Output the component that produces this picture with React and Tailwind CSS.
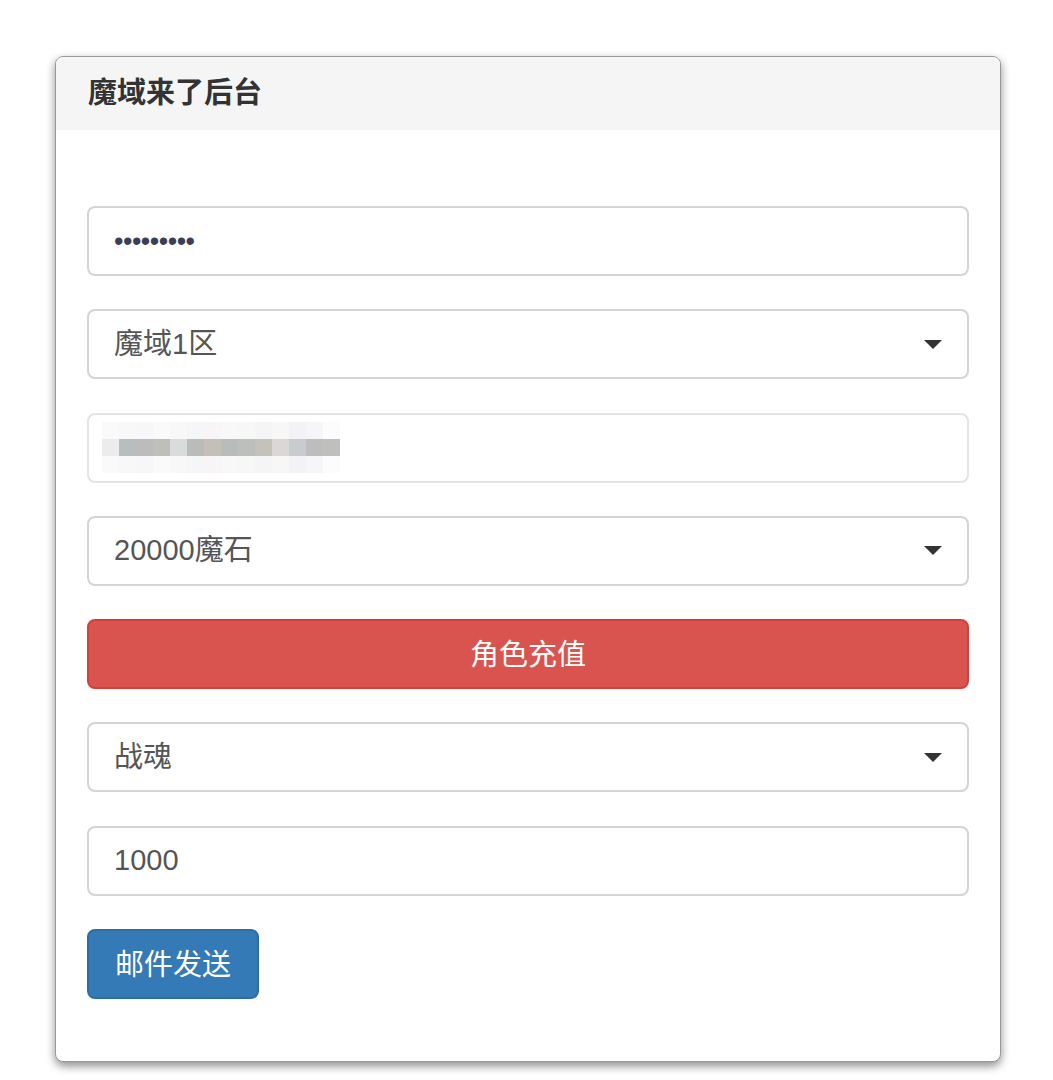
import React from 'react';

const font = { fontFamily: '"Liberation Sans", "Noto Sans CJK SC", sans-serif' };

// mosaic blocks covering the blurred account field
const mosaic = [
  '#ececec', '#b6bfbf', '#bcbcbc', '#bfbfba', '#d8dcdb', '#bbbcb9', '#c6beb8',
  '#b8bdbb', '#bcbfbc', '#c4c2bb', '#dcd6d6', '#c8ccd0', '#bdbdbb', '#bfbfbd',
];
const mosaicLow = [
  '#fafafa', '#f8f8f8', '#f7f7f9', '#fafafa', '#f8f8f8', '#f5f6f8', '#f7f5f5',
  '#f8f8f8', '#f7f7f7', '#f5f5f5', '#f7f7f7', '#f3f3f7', '#f5f5fa', '#fcfcfc',
];

function Caret() {
  return (
    <svg width="18" height="9" viewBox="0 0 18 9" className="shrink-0">
      <path d="M0 0 H18 L9 9 Z" fill="#333" />
    </svg>
  );
}

function Field({ children, select = false }) {
  return (
    <div className="flex items-center h-[70px] w-full border-2 border-[#d4d4d4] rounded-[8px] bg-white pl-[25px] pr-[25px] text-[29px] text-[#555]">
      <div className="flex-1">{children}</div>
      {select && <Caret />}
    </div>
  );
}

export default function App() {
  return (
    <div className="min-h-[1080px] bg-white pt-[56px] pl-[55px]" style={font}>
      <div className="w-[946px] border border-[#9a9a9a] rounded-[8px] bg-white shadow-[0_4px_10px_rgba(0,0,0,0.45)] overflow-hidden">
        <div className="h-[73px] bg-[#f5f5f5] flex items-center pl-[32px] text-[29px] font-bold text-[#333]">
          魔域来了后台
        </div>
        <div className="px-[31px] pt-[76px] pb-[62px] flex flex-col gap-[33.3px]">
          <Field>
            <span className="text-[27px] tracking-[-0.5px] text-[#3a3f55]">•••••••••</span>
          </Field>
          <Field select>魔域1区</Field>
          <div className="flex flex-col justify-center h-[70px] w-full border-2 border-[#e4e4e4] rounded-[8px] bg-white pl-[13px]">
            <div className="flex h-[17px]">
              {mosaicLow.map((c, i) => (
                <div key={i} className="w-[17px] h-full" style={{ background: c }} />
              ))}
            </div>
            <div className="flex h-[17px]">
              {mosaic.map((c, i) => (
                <div key={i} className="w-[17px] h-full" style={{ background: c }} />
              ))}
            </div>
            <div className="flex h-[17px]">
              {mosaicLow.map((c, i) => (
                <div key={i} className="w-[17px] h-full" style={{ background: c }} />
              ))}
            </div>
          </div>
          <Field select>20000魔石</Field>
          <button className="h-[70px] w-full rounded-[8px] border-2 border-[#d43f3a] bg-[#d9534f] text-white text-[29px] pt-[3px]">
            角色充值
          </button>
          <Field select>战魂</Field>
          <Field>1000</Field>
          <div>
            <button className="h-[70px] px-[26px] rounded-[8px] border-2 border-[#2e6da4] bg-[#337ab7] text-white text-[29px] pt-[3px]">
              邮件发送
            </button>
          </div>
        </div>
      </div>
    </div>
  );
}
